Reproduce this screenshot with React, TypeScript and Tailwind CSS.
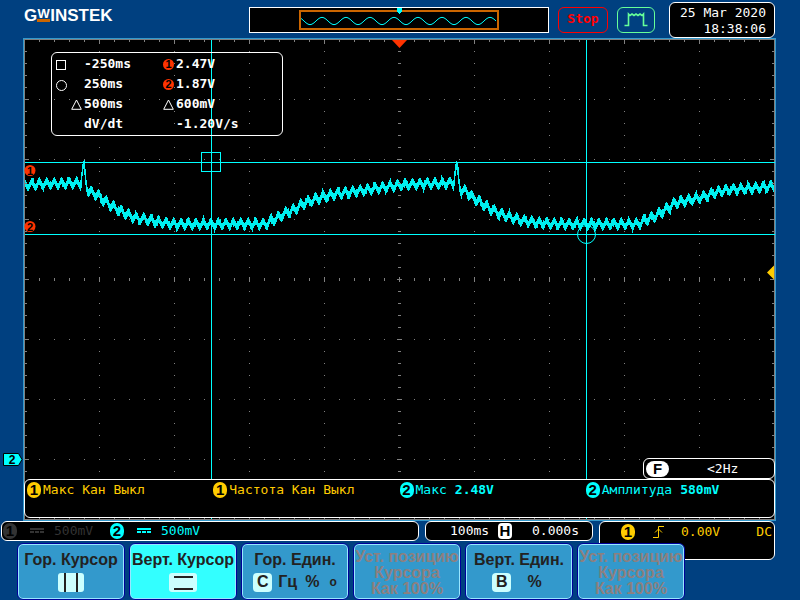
import type { ReactNode } from "react";
import { clsx } from "clsx";

const range = (from: number, to: number, step: number) => {
  const out: number[] = [];
  for (let v = from; v <= to; v += step) out.push(v);
  return out;
};

// Screen units: one division is 75 x 60, origin of the grid at (24, 39)
const COLS = range(24, 774, 15);
const ROWS = range(39, 519, 12);

// Mean level of the channel 2 trace, without ripple
const LEVELS: [number, number][] = [
  [25, 185], [40, 184], [79, 183], [80, 184], [82, 170], [83, 167], [84, 170],
  [86, 186], [88, 191], [97, 195], [104, 201], [113, 207], [120, 211],
  [128, 215], [135, 218], [143, 219], [158, 222], [172, 224], [200, 224],
  [266, 224], [270, 221], [277, 218], [285, 213], [295, 209], [302, 204],
  [312, 200], [322, 197], [335, 194], [350, 192], [365, 190], [385, 187],
  [400, 185], [420, 184], [452, 183], [453, 184], [455, 169], [456, 167],
  [457, 170], [459, 186], [461, 191], [466, 191], [472, 198], [480, 202],
  [488, 208], [500, 214], [512, 218], [525, 221], [540, 223], [560, 224],
  [638, 224], [645, 220], [655, 216], [663, 211], [675, 203], [688, 200],
  [703, 197], [713, 193], [725, 190], [740, 189], [755, 188], [773, 186],
];

function levelAt(x: number) {
  const i = LEVELS.findIndex(([lx]) => lx > x);
  if (i < 1) return i === 0 ? LEVELS[0][1] : LEVELS[LEVELS.length - 1][1];
  const [x0, y0] = LEVELS[i - 1];
  const [x1, y1] = LEVELS[i];
  return y0 + ((y1 - y0) * (x - x0)) / (x1 - x0);
}

function tracePath() {
  return range(25, 773, 1)
    .map((x) => {
      const ripple = Math.cos((2 * Math.PI * (x - 31.3)) / 7.463) * 3;
      const near = [levelAt(x - 0.5), levelAt(x), levelAt(x + 0.5)];
      const spikeUp = (x * 7919) % 17 === 3 ? 2 : 0;
      const spikeDown = (x * 104729) % 19 === 5 ? 2 : 0;
      const top = Math.round(Math.min(...near) - ripple - 3.6) - spikeUp;
      const bottom = Math.round(Math.max(...near) - ripple + 3.6) + spikeDown;
      return `M${x + 0.5} ${top}V${bottom}`;
    })
    .join("");
}

const TRACE = tracePath();

const MEMORY_WAVE = range(52, 247, 1)
  .map((x, i) => `${i ? "L" : "M"}${x} ${14 - Math.cos((2 * Math.PI * (x - 73)) / 24) * 3.6}`)
  .join("");

function Badge({ children, className }: { children: ReactNode; className?: string }) {
  return (
    <span
      className={clsx(
        "inline-flex h-4 w-[14px] shrink-0 items-center justify-center rounded-full font-['Liberation_Sans'] text-[15px] leading-4 font-bold text-black",
        className,
      )}
    >
      {children}
    </span>
  );
}

function SmallBadge({ children }: { children: ReactNode }) {
  return (
    <span className="flex h-[11px] w-[11px] items-center justify-center rounded-full bg-[#ff3300] font-['Liberation_Sans'] text-[11px] leading-[11px] font-bold text-black">
      {children}
    </span>
  );
}

function Triangle() {
  return (
    <svg className="h-[11px] w-[11px]" viewBox="0 0 11 11" fill="none" stroke="white">
      <path d="M5.5 1 L10.3 10.3 H0.7 Z" />
    </svg>
  );
}

function DcCoupling() {
  return (
    <svg className="h-[6px] w-[14px]" viewBox="0 0 14 6" fill="currentColor" shapeRendering="crispEdges">
      <path d="M0 0h14v2H0zM0 3h4v2H0zM5 3h4v2H5zM10 3h4v2h-4z" />
    </svg>
  );
}

function Header() {
  return (
    <header className="flex h-[38px] items-start pr-[25px] pl-6">
      <h1 className="flex w-[225px] shrink-0 pt-[6px] font-['Liberation_Sans'] text-[17px] leading-5 font-bold text-white">
        G
        <span className="flex h-4 flex-col items-center self-start pt-[3px] text-[13px] leading-[9px]">
          W
          <span className="mt-px h-[3px] w-[13px] shrink-0 bg-[#cc6600]" />
        </span>
        INSTEK
      </h1>
      <svg
        className="mt-[7px] h-[26px] min-w-0 flex-1 bg-black"
        viewBox="0 0 300 26"
        preserveAspectRatio="none"
        fill="none"
      >
        <rect x="0.5" y="0.5" width="299" height="25" stroke="white" />
        <rect x="51" y="4" width="198" height="18" stroke="#cc6600" strokeWidth="2" />
        <path d={MEMORY_WAVE} stroke="#00ffff" />
        <path d="M148 1h5v4h-1v1h-1v1h-1v-1h-1v-1h-1z" fill="#00ffff" />
      </svg>
      <button className="mt-[7px] ml-[9px] h-[26px] w-[50px] rounded-md border border-[#ff0000] pb-[2px] font-['DejaVu_Sans_Mono'] text-[13px] leading-4 font-bold text-[#ff0000]">
        Stop
      </button>
      <div className="mt-[7px] ml-[9px] flex h-[26px] w-[38px] items-center justify-center rounded-md border border-[#66ff99]">
        <svg className="h-4 w-6" viewBox="0 0 24 16" fill="none" stroke="#66ff99" strokeWidth="1.6">
          <path d="M0.5 13.500H4.500V2L6 3.500L8 2L10 3.500L12 2L14 3.500L16 2L18 3.500L19.500 2V13.500H23.500" />
        </svg>
      </div>
      <div className="mt-[2px] ml-[14px] h-9 w-[106px] rounded-md border border-white bg-black pt-[2px] pr-2 text-right font-['DejaVu_Sans_Mono'] text-[13px] leading-4 whitespace-nowrap text-white">
        <p>25 Mar 2020</p>
        <p>18:38:06</p>
      </div>
    </header>
  );
}

function Graticule() {
  return (
    <g fill="#808080">
      {COLS.map((x) => {
        const major = (x - 24) % 75 === 0;
        return (
          <g key={x}>
            <rect x={x} y="40" width="1" height={major ? 4 : 2} />
            <rect x={x} y="517" width="1" height="2" />
            <rect x={x} y={major ? 277 : 278} width="1" height={major ? 5 : 3} />
            {[99, 159, 219, 339, 399, 459].map((y) => (
              <rect key={y} x={x} y={y} width="1" height="1" />
            ))}
          </g>
        );
      })}
      {ROWS.map((y) => {
        const major = (y - 39) % 60 === 0;
        return (
          <g key={y}>
            <rect x="25" y={y} width={major ? 4 : 2} height="1" />
            <rect x={major ? 770 : 772} y={y} width={major ? 4 : 2} height="1" />
            <rect x={major ? 397 : 398} y={y} width={major ? 5 : 3} height="1" />
            {[99, 174, 249, 324, 474, 549, 624, 699].map((x) => (
              <rect key={x} x={x} y={y} width="1" height="1" />
            ))}
          </g>
        );
      })}
    </g>
  );
}

function Waveforms() {
  return (
    <svg className="block h-auto w-full overflow-visible" viewBox="23 38 753 483">
      <g shapeRendering="crispEdges">
        <rect x="23" y="38" width="753" height="483" fill="#3399cc" />
        <rect x="24" y="39" width="751" height="481" fill="#808080" />
        <rect x="25" y="40" width="749" height="479" fill="black" />
        <path d={TRACE} stroke="#00f0f0" />
        <Graticule />
        <path d="M25 162.500H775M25 234.500H775M211.500 40V519M586.500 40V519" stroke="#00ffff" />
        <rect x="201.500" y="152.500" width="19" height="19" fill="none" stroke="#00ffff" />
      </g>
      <circle cx="586.500" cy="234.500" r="9" fill="none" stroke="#00ffff" />
      <path d="M392 40H407L399.500 48Z" fill="#ff3300" />
      <path d="M774 265.500V279.500L767 272.500Z" fill="#ffcc00" />
      <g fontFamily="Liberation Sans" fontWeight="bold" fontSize="11" textAnchor="middle">
        <circle cx="30" cy="170.500" r="5.500" fill="#ff3300" />
        <text x="30" y="174.500">1</text>
        <circle cx="30" cy="226.500" r="5.500" fill="#ff3300" />
        <text x="30" y="230.500">2</text>
        <path d="M3.500 453.500H18.500L22 459.500L18.500 465.500H3.500Z" fill="#00ffff" stroke="black" />
        <text x="12" y="464" fontSize="12">2</text>
      </g>
    </svg>
  );
}

function CursorReadout() {
  return (
    <div className="absolute top-[14px] left-7 grid w-[232px] auto-rows-[20px] grid-cols-[15px_13px_79px_13px_1fr] items-center rounded-md border border-white pt-px pb-px pl-1 font-['DejaVu_Sans_Mono'] text-[13px] leading-5 font-bold whitespace-nowrap text-white">
      <span className="mt-[2px] h-[10px] w-[10px] border border-white" />
      <span />
      <span>-250ms</span>
      <SmallBadge>1</SmallBadge>
      <span>2.47V</span>

      <span className="mt-[2px] h-[11px] w-[11px] rounded-full border border-white" />
      <span />
      <span>250ms</span>
      <SmallBadge>2</SmallBadge>
      <span>1.87V</span>

      <span />
      <Triangle />
      <span>500ms</span>
      <Triangle />
      <span>600mV</span>

      <span />
      <span />
      <span>dV/dt</span>
      <span />
      <span>-1.20V/s</span>
    </div>
  );
}

interface MeasurementProps {
  channel: 1 | 2;
  name: string;
  value?: string;
}

function Measurement({ channel, name, value }: MeasurementProps) {
  return (
    <div
      className={clsx(
        "flex h-[18px] items-center gap-[2px] whitespace-nowrap",
        channel === 1 ? "text-[#ffcc00]" : "text-[#00ffff]",
      )}
    >
      <Badge className={channel === 1 ? "bg-[#ffcc00]" : "bg-[#00ffff]"}>{channel}</Badge>
      <span>{name}</span>
      {value && <span className="ml-[6px] font-bold">{value}</span>}
    </div>
  );
}

function Screen() {
  return (
    <main className="relative mr-6 ml-[23px]">
      <Waveforms />
      <CursorReadout />
      <div className="absolute inset-x-px bottom-[3px] flex flex-col items-end">
        <div className="flex h-[21px] w-[132px] items-center rounded-md border border-white bg-black pl-[2px] font-['DejaVu_Sans_Mono'] text-[13px] text-white">
          <Badge className="w-[23px] bg-white">F</Badge>
          <span className="ml-[38px]">&lt;2Hz</span>
        </div>
        <div className="grid h-[39px] w-full grid-cols-4 items-start rounded-md border border-white bg-black px-[2px] pt-px font-['DejaVu_Sans_Mono'] text-[13px]">
          <Measurement channel={1} name="Макс Кан Выкл" />
          <Measurement channel={1} name="Частота Кан Выкл" />
          <Measurement channel={2} name="Макс" value="2.48V" />
          <Measurement channel={2} name="Амплитуда" value="580mV" />
        </div>
      </div>
    </main>
  );
}

function StatusBar() {
  return (
    <section className="flex items-start gap-[6px] pr-[25px] pl-px font-['DejaVu_Sans_Mono'] text-[13px] leading-4 whitespace-nowrap">
      <div className="flex h-5 flex-1 items-center rounded-md border border-white bg-black pl-px text-[#00ffff]">
        <div className="flex w-[107px] items-center text-[#333333]">
          <Badge className="bg-[#333333]">1</Badge>
          <span className="mr-[10px] ml-[13px]"><DcCoupling /></span>
          500mV
        </div>
        <Badge className="bg-[#00ffff]">2</Badge>
        <span className="mr-[10px] ml-[13px]"><DcCoupling /></span>
        500mV
      </div>
      <div className="flex h-5 w-[168px] items-center rounded-md border border-white bg-black pl-6 text-white">
        <span className="w-12">100ms</span>
        <Badge className="rounded-sm bg-white">H</Badge>
        <span className="ml-5">0.000s</span>
      </div>
      <div className="h-[39px] w-[176px] rounded-md border border-white bg-black">
        <div className="flex h-5 items-center pr-[2px] pl-[21px] text-[#ffcc00]">
          <Badge className="bg-[#ffcc00]">1</Badge>
          <svg className="ml-[18px] h-3 w-3" viewBox="0 0 12 12" fill="none" stroke="currentColor">
            <path d="M0 11.500H5.500V0.500H11M2 6.500L5.500 3L9 6.500" />
          </svg>
          <span className="ml-4">0.00V</span>
          <span className="ml-auto">DC</span>
        </div>
      </div>
    </section>
  );
}

interface SoftKeyProps {
  label: string;
  active?: boolean;
  children: ReactNode;
}

function SoftKey({ label, active, children }: SoftKeyProps) {
  return (
    <button
      className={clsx(
        "flex h-[57px] w-[108px] flex-col items-center rounded-md border border-[#000099] pt-2 text-[#222222] inset-ring inset-ring-[#99e6ff]",
        active ? "bg-[#33ffff]" : "bg-[#3399cc]",
      )}
    >
      <span>{label}</span>
      <span className="mt-1 flex h-5 items-center">{children}</span>
    </button>
  );
}

function DisabledKey() {
  return (
    <button
      disabled
      className="flex h-[57px] w-[108px] flex-col items-center rounded-md border border-[#000099] bg-[#3399cc] pt-[5px] text-[#8c8080] inset-ring inset-ring-[#99e6ff]"
    >
      <span>Уст. позицию</span>
      <span>Курсора</span>
      <span>Как 100%</span>
    </button>
  );
}

function Chip({ children }: { children: ReactNode }) {
  return (
    <span className="flex h-[19px] w-[19px] items-center justify-center rounded-sm bg-[#ccffff]">
      {children}
    </span>
  );
}

function SoftKeys() {
  return (
    <nav className="relative -mt-[17px] flex gap-1 pl-[17px] font-['Liberation_Sans'] text-[16px] leading-4 font-bold whitespace-nowrap">
      <SoftKey label="Гор. Курсор">
        <svg className="h-[19px] w-[26px]" viewBox="0 0 26 19">
          <rect width="26" height="19" rx="3" fill="#ccffff" />
          <path d="M7 0V19M19 0V19" stroke="#222222" strokeWidth="2" />
        </svg>
      </SoftKey>
      <SoftKey label="Верт. Курсор" active>
        <svg className="h-[19px] w-7" viewBox="0 0 28 19">
          <rect width="28" height="19" rx="3" fill="#ccffff" />
          <path d="M5 4H24M5 16H24" stroke="#222222" strokeWidth="2" />
        </svg>
      </SoftKey>
      <SoftKey label="Гор. Един.">
        <Chip>C</Chip>
        <span className="ml-[6px]">Гц</span>
        <span className="ml-2">%</span>
        <span className="ml-[10px] text-[12px]">o</span>
      </SoftKey>
      <DisabledKey />
      <SoftKey label="Верт. Един.">
        <Chip>B</Chip>
        <span className="mr-1 ml-4">%</span>
      </SoftKey>
      <DisabledKey />
    </nav>
  );
}

export default function App() {
  return (
    <div className="flex min-h-screen flex-col bg-[#004080]">
      <Header />
      <Screen />
      <StatusBar />
      <SoftKeys />
    </div>
  );
}
